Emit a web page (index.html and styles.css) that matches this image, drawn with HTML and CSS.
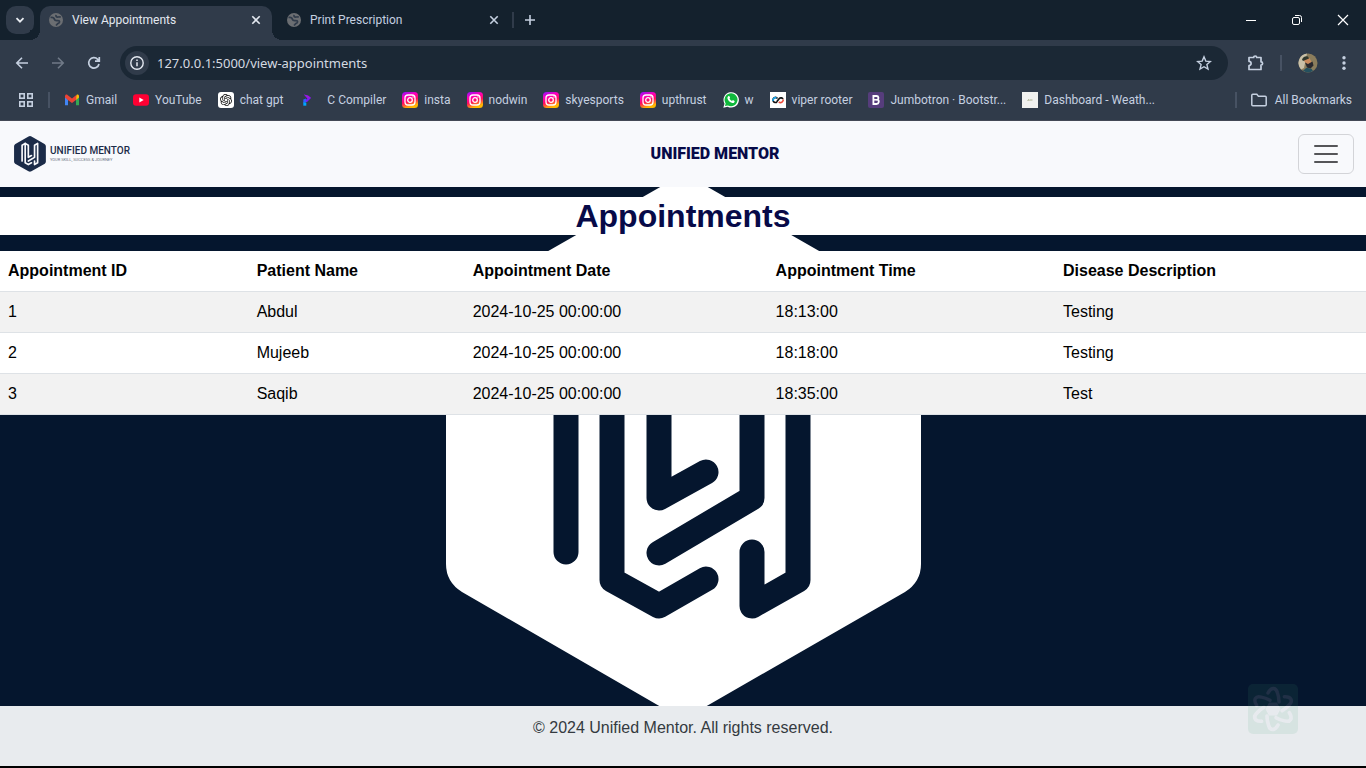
FILE: index.html
```html
<!DOCTYPE html>
<html lang="en">
<head>
<meta charset="utf-8">
<meta name="viewport" content="width=device-width, initial-scale=1">
<title>View Appointments</title>
<link rel="stylesheet" href="styles.css">
</head>
<body>
<svg class="defs" aria-hidden="true">
  <defs>
    <linearGradient id="ig" x1="0" y1="0" x2="0.35" y2="1">
      <stop offset="0" stop-color="#8a10ff"/><stop offset=".35" stop-color="#ff00b8"/><stop offset=".65" stop-color="#ff0a60"/><stop offset="1" stop-color="#ffb800"/>
    </linearGradient>
    <symbol id="globe" viewBox="0 0 16 16">
      <circle cx="8" cy="8" r="7" fill="#6b6e72"/>
      <path d="M2.500 5.500C5 5 6 5.500 6.500 7.500s3 .5 4.500 1.300c1.200.8.300 2.400-1.200 2.800L8 13.500M8 2.800c-.3 1.700.5 2.400 2 2.200l2.800-.2" fill="none" stroke="#303b4a" stroke-width="1.700"/>
    </symbol>
    <symbol id="close" viewBox="0 0 10 10"><path d="M1.300 1.300l7.400 7.400M8.700 1.300L1.300 8.700" stroke="currentColor" stroke-width="1.600"/></symbol>
    <symbol id="insta" viewBox="0 0 16 16">
      <rect width="16" height="16" rx="3.500" fill="url(#ig)"/>
      <rect x="3" y="3" width="10" height="10" rx="3" fill="none" stroke="#fff" stroke-width="1.300"/>
      <circle cx="8" cy="8" r="2.300" fill="none" stroke="#fff" stroke-width="1.300"/><circle cx="11" cy="5" r=".7" fill="#fff"/>
    </symbol>
    <symbol id="emblem" viewBox="445 172 478 552">
      <path class="hex" d="M662 186Q684 173 706 186L901 298Q921 310 921 332V564Q921 582 905 592L705 707Q683 720 661 707L462 592Q446 582 446 564V332Q446 310 466 298Z"/>
      <g class="bars" fill="none" stroke-width="25" stroke-linecap="round" stroke-linejoin="round">
        <path d="M566 552V316L612 289V580L659 606L706 579"/>
        <path d="M612 289L659 316V498L706 472"/>
        <path d="M659 553L752 498V316L798 289V580L752 606V552"/>
      </g>
    </symbol>
    <g id="petals" fill="none" stroke-width="3.500" stroke-linecap="round">
      <path id="petal" d="M20 9C23 3 28 3 29.500 9Q31 13 31 18"/>
      <use href="#petal" transform="rotate(60 25 25)"/>
      <use href="#petal" transform="rotate(120 25 25)"/>
      <use href="#petal" transform="rotate(180 25 25)"/>
      <use href="#petal" transform="rotate(240 25 25)"/>
      <use href="#petal" transform="rotate(300 25 25)"/>
    </g>
    <path id="core" d="M21 18.500h8l3.500 6.500-3.500 6.500h-8L17.500 25z"/>
    <mask id="cut" maskUnits="userSpaceOnUse" x="0" y="0" width="50" height="50">
      <rect width="50" height="50" fill="#fff"/>
      <use href="#petals" stroke="#000"/><use href="#core" fill="#000"/>
    </mask>
  </defs>
</svg>

<header class="chrome">
  <div class="tabstrip">
    <button class="tab-search" aria-label="Search tabs"><svg width="10" height="10" viewBox="0 0 10 10"><path d="M1.500 3.200L5 6.700l3.500-3.500" fill="none" stroke="currentColor" stroke-width="1.800"/></svg></button>
    <div class="tab active">
      <svg class="fav" width="16" height="16"><use href="#globe"/></svg>
      <span>View Appointments</span>
      <button aria-label="Close tab"><svg width="10" height="10"><use href="#close"/></svg></button>
    </div>
    <div class="tab">
      <svg class="fav" width="16" height="16"><use href="#globe"/></svg>
      <span>Print Prescription</span>
      <button aria-label="Close tab"><svg width="10" height="10"><use href="#close"/></svg></button>
    </div>
    <i class="tab-line"></i>
    <button class="new-tab" aria-label="New tab"><svg width="12" height="12" viewBox="0 0 12 12"><path d="M6 1v10M1 6h10" stroke="currentColor" stroke-width="1.600"/></svg></button>
    <div class="window-buttons">
      <button aria-label="Minimize"><svg width="12" height="12" viewBox="0 0 12 12"><path d="M1 6.500h10" stroke="currentColor"/></svg></button>
      <button aria-label="Restore"><svg width="12" height="12" viewBox="0 0 12 12" fill="none" stroke="currentColor"><rect x="1.500" y="3.500" width="7" height="7" rx="1.500"/><path d="M4 1.500h4.500q2 0 2 2V8"/></svg></button>
      <button aria-label="Close"><svg width="12" height="12" viewBox="0 0 12 12"><path d="M1 1l10 10M11 1L1 11" stroke="currentColor" stroke-width="1.200"/></svg></button>
    </div>
  </div>

  <div class="toolbar">
    <div class="nav-buttons">
      <button aria-label="Back"><svg width="16" height="16" viewBox="0 0 16 16"><path d="M14 8H3M8 2.800L2.800 8 8 13.200" fill="none" stroke="currentColor" stroke-width="1.600"/></svg></button>
      <button aria-label="Forward" disabled><svg width="16" height="16" viewBox="0 0 16 16"><path d="M2 8h11M8 2.800L13.200 8 8 13.200" fill="none" stroke="currentColor" stroke-width="1.600"/></svg></button>
      <button aria-label="Reload"><svg width="16" height="16" viewBox="0 0 16 16"><path d="M13 9A5.200 5.200 0 1 1 11.700 4.300L13 5.700M13.300 2v4.200H9" fill="none" stroke="currentColor" stroke-width="1.700"/></svg></button>
    </div>
    <div class="omnibox">
      <button class="site-info" aria-label="Site information"><svg width="16" height="16" viewBox="0 0 16 16"><circle cx="8" cy="8" r="6.200" fill="none" stroke="currentColor" stroke-width="1.400"/><path d="M8 7.200v4M8 4.400v1.500" stroke="currentColor" stroke-width="1.500"/></svg></button>
      <input type="text" aria-label="Address" value="127.0.0.1:5000/view-appointments">
      <button class="star" aria-label="Bookmark this tab"><svg width="16" height="16" viewBox="0 0 16 16"><path d="M8 1.800l1.800 4.300 4.600.4-3.500 3.100 1.100 4.500L8 11.700l-4 2.400 1.100-4.500L1.600 6.500l4.600-.4z" fill="none" stroke="currentColor" stroke-width="1.400"/></svg></button>
    </div>
    <button class="ext" aria-label="Extensions"><svg width="18" height="18" viewBox="0 0 18 18"><path d="M2 3.500h4.700a1.500 1.500 0 0 1 3 0H14v4.300a1.600 1.600 0 0 1 0 3.200v4.500H2v-4a2.100 2.100 0 0 0 0-4.200z" fill="none" stroke="currentColor" stroke-width="1.700" stroke-linejoin="round"/></svg></button>
    <i class="line"></i>
    <button class="avatar" aria-label="Profile"><svg width="20" height="20" viewBox="0 0 20 20"><circle cx="10" cy="10" r="9.500" fill="#8b7d5c"/><path d="M1 7a9.500 9.500 0 0 1 8-6.500L6 15 3 16.500A9.500 9.500 0 0 1 1 7z" fill="#c9c0a8"/><path d="M5.500 7l6-2 2 4-1 4-3 0z" fill="#c98a5c"/><path d="M4 6.500Q6 2.500 10 3.500l1 2-6 2.500z" fill="#30372c"/><path d="M7 9.500l3 1.500 4.500-2.500 1 4-3 3-3.500-1z" fill="#29282e"/><path d="M5 17.800l3.500-3 5 1 1.500 2.200a9.500 9.500 0 0 1-10-.2z" fill="#24505f"/></svg></button>
    <button class="menu" aria-label="Menu"><svg width="16" height="16" viewBox="0 0 16 16" fill="currentColor"><circle cx="8" cy="2.800" r="1.700"/><circle cx="8" cy="8" r="1.700"/><circle cx="8" cy="13.200" r="1.700"/></svg></button>
  </div>

  <nav class="bookmarks" aria-label="Bookmarks">
    <button class="apps" aria-label="Apps"><svg width="16" height="16" viewBox="0 0 16 16" fill="none" stroke="currentColor" stroke-width="1.600"><rect x="1.800" y="1.800" width="4.400" height="4.400"/><rect x="9.800" y="1.800" width="4.400" height="4.400"/><rect x="1.800" y="9.800" width="4.400" height="4.400"/><rect x="9.800" y="9.800" width="4.400" height="4.400"/></svg></button>
    <i class="line"></i>
    <div class="links">
      <a href="#"><svg width="16" height="16" viewBox="0 0 16 16"><path d="M1 4.500v8.700h3V7.500z" fill="#4285f4"/><path d="M15 4.500v8.700h-3V7.500z" fill="#34a853"/><path d="M12 4.200V8l3-2.500V4.200c0-1.500-1.600-2-2.500-1.200z" fill="#fbbc04"/><path d="M1 4.200c0-1.500 1.600-2 2.500-1.200L8 6.400 12.300 3v4.800L8 11 3.900 7.900 1 5.600z" fill="#ea4335"/></svg>Gmail</a>
      <a href="#"><svg width="16" height="16" viewBox="0 0 16 16"><rect y="2.300" width="16" height="11.400" rx="3" fill="#ff0033"/><path d="M6.300 5.500v5L10.700 8z" fill="#fff"/></svg>YouTube</a>
      <a href="#"><svg width="16" height="16" viewBox="-4 -4 32 32"><rect x="-4" y="-4" width="32" height="32" rx="6" fill="#fff"/><path fill="#111" d="M22.2819 9.8211a5.9847 5.9847 0 0 0-.5157-4.9108 6.0462 6.0462 0 0 0-6.5098-2.9A6.0651 6.0651 0 0 0 4.9807 4.1818a5.9847 5.9847 0 0 0-3.9977 2.9 6.0462 6.0462 0 0 0 .7427 7.0966 5.98 5.98 0 0 0 .511 4.9107 6.051 6.051 0 0 0 6.5146 2.9001A5.9847 5.9847 0 0 0 13.2599 24a6.0557 6.0557 0 0 0 5.7718-4.2058 5.9894 5.9894 0 0 0 3.9977-2.9001 6.0557 6.0557 0 0 0-.7475-7.0729zm-9.022 12.6081a4.4755 4.4755 0 0 1-2.8764-1.0408l.1419-.0804 4.7783-2.7582a.7948.7948 0 0 0 .3927-.6813v-6.7369l2.02 1.1686a.071.071 0 0 1 .038.052v5.5826a4.504 4.504 0 0 1-4.4945 4.4944zm-9.6607-4.1254a4.4708 4.4708 0 0 1-.5346-3.0137l.142.0852 4.783 2.7582a.7712.7712 0 0 0 .7806 0l5.8428-3.3685v2.3324a.0804.0804 0 0 1-.0332.0615L9.74 19.9502a4.4992 4.4992 0 0 1-6.1408-1.6464zM2.3408 7.8956a4.485 4.485 0 0 1 2.3655-1.9728V11.6a.7664.7664 0 0 0 .3879.6765l5.8144 3.3543-2.0201 1.1685a.0757.0757 0 0 1-.071 0l-4.8303-2.7865A4.504 4.504 0 0 1 2.3408 7.872zm16.5963 3.8558L13.1038 8.364 15.1192 7.2a.0757.0757 0 0 1 .071 0l4.8303 2.7913a4.4944 4.4944 0 0 1-.6765 8.1042v-5.6772a.79.79 0 0 0-.407-.667zm2.0107-3.0231l-.142-.0852-4.7735-2.7818a.7759.7759 0 0 0-.7854 0L9.409 9.2297V6.8974a.0662.0662 0 0 1 .0284-.0615l4.8303-2.7866a4.4992 4.4992 0 0 1 6.6802 4.66zM8.3065 12.863l-2.02-1.1638a.0804.0804 0 0 1-.038-.0567V6.0742a4.4992 4.4992 0 0 1 7.3757-3.4537l-.142.0805L8.704 5.459a.7948.7948 0 0 0-.3927.6813zm1.0976-2.3654l2.602-1.4998 2.6069 1.4998v2.9994l-2.5974 1.4997-2.6067-1.4997Z"/></svg>chat gpt</a>
      <a href="#"><svg width="16" height="16" viewBox="0 0 16 16"><path d="M5 2.500l4 1.300 3 2.200-4 4H6V8.200L8.500 6.500z" fill="#7a1cf5"/><path d="M5 2.500l4.500 1.300L12 6 8.500 6.500z" fill="#9a18e0"/><path d="M4.300 7.500L7 6.500v3.800l-2.700 1z" fill="#2f5cff"/><path d="M4.300 10.500h3v3.200H4.300z" fill="#00a4ff"/></svg>&nbsp; C Compiler</a>
      <a href="#"><svg width="16" height="16"><use href="#insta"/></svg>insta</a>
      <a href="#"><svg width="16" height="16"><use href="#insta"/></svg>nodwin</a>
      <a href="#"><svg width="16" height="16"><use href="#insta"/></svg>skyesports</a>
      <a href="#"><svg width="16" height="16"><use href="#insta"/></svg>upthrust</a>
      <a href="#"><svg width="16" height="16" viewBox="0 0 16 16"><path d="M.3 15.700l1.200-4A7.700 7.700 0 1 1 4.600 14.700z" fill="#fff"/><path d="M1.900 14.100l.8-2.700a6.500 6.500 0 1 1 2.200 2z" fill="#10b83c"/><path d="M5.200 4.200c.6-.5 1.200-.3 1.400.3l.5 1.200-.6.9c.5 1.100 1.300 1.900 2.500 2.400l.9-.9 1.700.8c.3 1.300-1 2.300-2.300 2-2.500-.6-4.500-2.600-4.900-4.700-.1-.8.2-1.500.8-2z" fill="#fff"/></svg>w</a>
      <a href="#"><svg width="16" height="16" viewBox="0 0 16 16" fill="none" stroke-width="1.700"><path d="M0 0h16v16H0z" fill="#fff"/><path d="M7.500 6.500A2.500 2.500 0 1 0 7 10" stroke="#111"/><path d="M3.200 9A2.500 2.500 0 0 1 6.500 5.800" stroke="#1aa3e8"/><path d="M6.700 9.800L9.500 6.300A2.500 2.500 0 0 1 13 7" stroke="#111"/><path d="M13.200 7.500A2.600 2.600 0 0 1 8.800 9.800" stroke="#f04a3a"/></svg>viper rooter</a>
      <a href="#"><svg width="16" height="16" viewBox="0 0 16 16"><rect width="16" height="16" rx="2" fill="#563d7c"/><path d="M5.400 4h3.100c2.300 0 2.500 2.900.9 3.700 2.200.8 1.700 4.300-1 4.300h-3z" fill="none" stroke="#fff" stroke-width="1.800"/><path d="M5.400 7.800h3.700" stroke="#fff" stroke-width="1.500"/></svg>Jumbotron · Bootstr...</a>
      <a href="#"><svg width="16" height="16" viewBox="0 0 16 16"><path d="M0 0h16v16H0z" fill="#f1f1ef"/><path d="M5.500 8.500l1.500-1v1.500M8 8h2.500" stroke="#aab08e" fill="none"/></svg>Dashboard - Weath...</a>
    </div>
    <i class="line"></i>
    <a class="all" href="#"><svg width="16" height="16" viewBox="0 0 16 16"><path d="M.8 3.300q0-1 1-1h4l1.600 1.900h6.800q1 0 1 1v7.500q0 1-1 1H1.800q-1 0-1-1z" fill="none" stroke="currentColor" stroke-width="1.500"/></svg>All Bookmarks</a>
  </nav>
</header>

<nav class="navbar">
  <a class="brand" href="#" aria-label="Unified Mentor home">
    <svg class="brand-mark" width="32" height="38"><use href="#emblem"/></svg>
    <span class="brand-text"><b>UNIFIED MENTOR</b><small>YOUR SKILL, SUCCESS &amp; JOURNEY</small></span>
  </a>
  <span class="site-name">UNIFIED MENTOR</span>
  <button class="toggler" aria-label="Toggle navigation"><svg width="30" height="30" viewBox="0 0 30 30"><path d="M4 7h22M4 15h22M4 23h22" stroke="currentColor" stroke-width="2" stroke-linecap="round"/></svg></button>
</nav>

<main class="page">
  <svg class="backdrop" viewBox="0 187 1366 519" preserveAspectRatio="xMidYMid slice" aria-hidden="true"><use href="#emblem" x="445" y="172" width="478" height="552"/></svg>
  <h1>Appointments</h1>
  <table>
    <thead><tr><th>Appointment ID</th><th>Patient Name</th><th>Appointment Date</th><th>Appointment Time</th><th>Disease Description</th></tr></thead>
    <tbody>
      <tr><td>1</td><td>Abdul</td><td>2024-10-25 00:00:00</td><td>18:13:00</td><td>Testing</td></tr>
      <tr><td>2</td><td>Mujeeb</td><td>2024-10-25 00:00:00</td><td>18:18:00</td><td>Testing</td></tr>
      <tr><td>3</td><td>Saqib</td><td>2024-10-25 00:00:00</td><td>18:35:00</td><td>Test</td></tr>
    </tbody>
  </table>
</main>

<footer class="footer">
  <p>© 2024 Unified Mentor. All rights reserved.</p>
  <svg class="badge" viewBox="0 0 50 50" aria-hidden="true">
    <rect width="50" height="50" rx="5" fill="#46a078" opacity=".1" mask="url(#cut)"/>
    <g opacity=".12"><use href="#petals" stroke="#e6e8f5"/><use href="#core" fill="#e6e8f5"/></g>
  </svg>
</footer>
</body>
</html>
```
FILE: styles.css
```css
* { box-sizing: border-box; }

body {
  margin: 0;
  min-height: 100vh;
  display: flex;
  flex-direction: column;
  font: 16px/24px "Liberation Sans", Arial, sans-serif;
  background: #05162e;
  border-bottom: 2px solid #000;
}

button {
  display: grid;
  place-items: center;
  padding: 0;
  border: 0;
  background: none;
  color: inherit;
}

a { color: inherit; text-decoration: none; }
svg { display: block; flex: none; }
.defs { position: absolute; width: 0; height: 0; }

/* Browser frame */
.chrome {
  font: 12px/16px Roboto, sans-serif;
  color: #c5d0e0;
  background: #303b4a;
  border-bottom: 1px solid #434855;
}

.tabstrip {
  display: flex;
  align-items: center;
  height: 40px;
  padding-left: 6px;
  background: #14212d;
}

.tab-search {
  width: 28px;
  height: 28px;
  margin-right: 6px;
  border-radius: 10px;
  background: #303b4a;
  color: #e8ecf2;
}

.tab {
  display: flex;
  align-items: center;
  align-self: flex-end;
  gap: 8px;
  width: 232px;
  height: 34px;
  padding: 0 11px 6px 8px;
  margin-right: 2px;
}

.tab span { flex: 1; white-space: nowrap; }

.tab.active {
  position: relative;
  margin-right: 6px;
  border-radius: 10px 10px 0 0;
  background: #303b4a;
  color: #e3e8f0;
}

.tab.active::before,
.tab.active::after {
  content: "";
  position: absolute;
  bottom: 0;
  width: 10px;
  height: 10px;
}

.tab.active::before { right: 100%; background: radial-gradient(circle at 0 0, #14212d 10px, #303b4a 10px); }
.tab.active::after { left: 100%; background: radial-gradient(circle at 100% 0, #14212d 10px, #303b4a 10px); }

.tab-line { width: 2px; height: 16px; background: #303b4a; }
.new-tab { width: 32px; height: 28px; }
.window-buttons { display: flex; margin-left: auto; color: #fff; }
.window-buttons button { width: 46px; height: 40px; }

.toolbar {
  display: flex;
  align-items: center;
  height: 40px;
  padding: 6px 14px 0 4px;
}

.nav-buttons { display: flex; }
.nav-buttons button { width: 36px; height: 32px; }
.nav-buttons button:disabled { color: #707a88; }

.omnibox {
  display: flex;
  align-items: center;
  flex: 1;
  height: 34px;
  margin: 0 16px 0 8px;
  padding: 0 16px 0 5px;
  border-radius: 17px;
  background: #1b2835;
}

.site-info { width: 24px; height: 24px; border-radius: 50%; background: #303b4a; color: #e3e8f0; }

.omnibox input {
  flex: 1;
  min-width: 0;
  padding: 0 8px;
  border: 0;
  outline: 0;
  background: none;
  color: #d5dae1;
  font: 13px/20px "Noto Sans", sans-serif;
}

.ext { width: 24px; height: 24px; }
.line { flex: none; width: 2px; height: 16px; background: #475263; }
.toolbar .line { margin: 0 12px; }
.avatar { width: 28px; height: 28px; margin-right: 14px; }

.bookmarks { display: flex; align-items: center; height: 40px; padding: 0 14px 0 18px; }
.bookmarks .line { margin: 0 14px; }
.links { display: flex; flex: 1; gap: 16px; }
.bookmarks a { display: flex; align-items: center; gap: 6px; white-space: nowrap; }
.bookmarks .all { gap: 8px; }

/* Site header */
.navbar {
  display: flex;
  align-items: center;
  justify-content: space-between;
  padding: 13px 12px;
  background: #f8f9fc;
}

.brand { display: flex; align-items: center; gap: 4px; width: 120px; padding-left: 2px; color: #1b2b48; }
.brand-text { display: flex; flex-direction: column; white-space: nowrap; }
.brand-text b { font: 500 10px/12px Roboto, sans-serif; }
.brand-text small { font: 4px/6px Roboto, sans-serif; color: #6b7280; }
.brand-mark { fill: #1b2b48; stroke: #f8f9fc; }
.hex { stroke: none; }

.site-name {
  font: 900 16px/24px Impact, Roboto, sans-serif;
  color: #070a48;
}

.toggler {
  width: 56px;
  height: 40px;
  border: 1px solid #d3d4d8;
  border-radius: 6px;
  color: #555558;
}

/* Appointments */
.page { position: relative; flex: 1; overflow: hidden; }
.backdrop { position: absolute; inset: 0; z-index: -1; width: 100%; height: 100%; fill: #fff; stroke: #05162e; }

h1 {
  margin: 10px 0 16px;
  font-size: 32px;
  line-height: 38px;
  text-align: center;
  color: #070a48;
  background: #fff;
}

table { width: 100%; border-collapse: collapse; background: #fff; color: #000; }
th, td { padding: 8px; border-bottom: 1px solid #dee2e6; text-align: left; }
tbody tr:nth-child(odd) { background: #f2f2f2; }

.footer { position: relative; padding: 10px; background: #e8ebee; color: #343a40; text-align: center; }
.footer p { margin: 0 0 16px; }
.badge { position: absolute; right: 68px; bottom: 32px; width: 50px; height: 50px; }
```
